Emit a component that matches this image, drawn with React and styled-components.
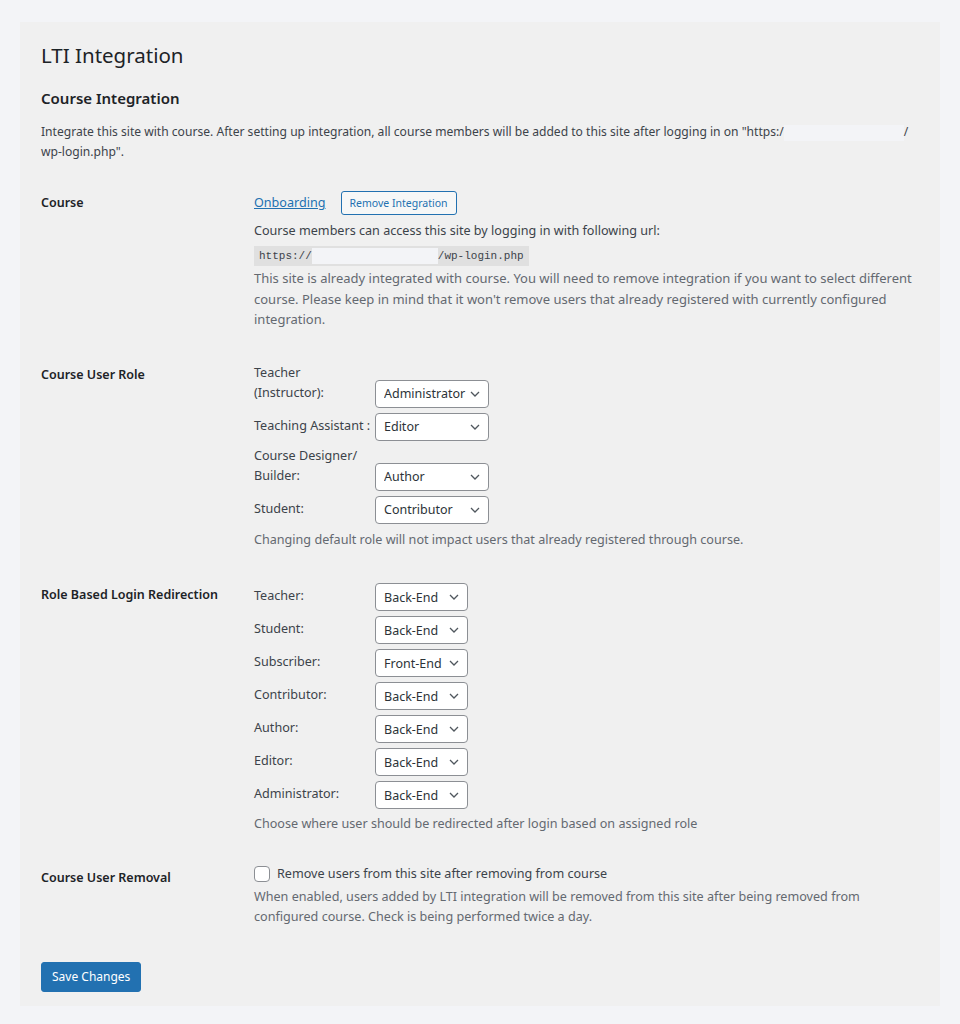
import React from "react";
import styled, { createGlobalStyle } from "styled-components";

const GlobalStyle = createGlobalStyle`
  body {
    margin: 0;
    background: #f3f4f7;
    font-family: "Noto Sans", "Open Sans", sans-serif;
    color: #3c434a;
  }
`;

const Page = styled.div`
  padding: 22px 20px 19px;
`;

const Panel = styled.form`
  background: #f0f0f0;
  padding: 18px 21px 14px;
`;

const Title = styled.h1`
  margin: 0;
  font-size: 20.5px;
  line-height: 30px;
  font-weight: 400;
  color: #1d2327;
`;

const Heading = styled.h2`
  margin: 16px 0 0;
  font-size: 15px;
  line-height: 24px;
  font-weight: 600;
  color: #1d2327;
`;

const Intro = styled.p`
  margin: 12px 0 0;
  font-size: 12.1px;
  line-height: 20px;
  color: #3c434a;
`;

const Hidden = styled.span`
  display: inline-block;
  vertical-align: middle;
  width: ${(p) => p.$w}px;
  height: 16px;
  background: #f3f4f7;
`;

const Table = styled.div`
  margin-top: 15px;
`;

const Row = styled.div`
  display: grid;
  grid-template-columns: 213px 1fr;
  padding: ${(p) => p.$top ?? 14}px 0 19px;
`;

const Th = styled.div`
  padding-top: ${(p) => p.$pad ?? 2}px;
  font-size: 12.5px;
  line-height: 20px;
  font-weight: 600;
  color: #1d2327;
`;

const Td = styled.div`
  font-size: 12.6px;
  line-height: 20px;
  color: #3c434a;
`;

const Inline = styled.div`
  display: flex;
  align-items: center;
  gap: 15px;
  height: 24px;
`;

const Link = styled.a`
  color: #2271b1;
  text-decoration: underline;
  font-size: 12.6px;
`;

const SmallButton = styled.button`
  height: 24px;
  padding: 0 8px;
  border: 1px solid #2271b1;
  border-radius: 3px;
  background: #f6f7f7;
  color: #2271b1;
  font-family: inherit;
  font-size: 10.5px;
  cursor: pointer;
`;

const Text = styled.p`
  margin: 6px 0 0;
`;

const Code = styled.code`
  display: inline-flex;
  align-items: center;
  margin-top: 5px;
  height: 20px;
  padding: 0 5px;
  background: #e0e0e0;
  font-family: "Liberation Mono", "DejaVu Sans Mono", monospace;
  font-size: 11px;
  color: #3c434a;
`;

const Description = styled.p`
  margin: ${(p) => p.$mt ?? 4}px 0 0;
  font-size: ${(p) => p.$size ?? 12.6}px;
  line-height: 20.5px;
  color: #646970;
`;

const FieldList = styled.div`
  display: flex;
  flex-direction: column;
  gap: 5px;
`;

const Field = styled.div`
  display: grid;
  grid-template-columns: 121px auto;
  justify-content: start;
  align-items: end;
`;

const FieldLabel = styled.label`
  padding-bottom: 5px;
  font-size: 12.6px;
  line-height: 20px;
  color: #3c434a;
`;

const SelectWrap = styled.div`
  position: relative;
  width: ${(p) => p.$w}px;
`;

const Select = styled.select`
  appearance: none;
  display: block;
  width: 100%;
  height: 28px;
  padding: 0 20px 0 8px;
  border: 1px solid #8c8f94;
  border-radius: 4px;
  background: #fff;
  color: #2c3338;
  font-family: inherit;
  font-size: 12.5px;
`;

const Chevron = styled.svg`
  position: absolute;
  right: 9px;
  top: 11px;
  width: 10px;
  height: 6px;
  pointer-events: none;
`;

const CheckLine = styled.label`
  display: flex;
  align-items: center;
  gap: 7px;
  height: 20px;
  font-size: 12.6px;
  color: #3c434a;
`;

const Checkbox = styled.span`
  width: 14px;
  height: 14px;
  border: 1px solid #8c8f94;
  border-radius: 4px;
  background: #fff;
`;

const Submit = styled.div`
  margin-top: 15px;
`;

const PrimaryButton = styled.button`
  height: 30px;
  padding: 0 10px;
  border: 1px solid #2271b1;
  border-radius: 3px;
  background: #2271b1;
  color: #fff;
  font-family: inherit;
  font-size: 12px;
  cursor: pointer;
`;

const roleOptions = ["Administrator", "Editor", "Author", "Contributor", "Subscriber"];
const sideOptions = ["Back-End", "Front-End"];

function Dropdown({ value, options, width }) {
  return (
    <SelectWrap $w={width}>
      <Select defaultValue={value}>
        {options.map((o) => (
          <option key={o}>{o}</option>
        ))}
      </Select>
      <Chevron viewBox="0 0 10 6">
        <path d="M1 1l4 4 4-4" fill="none" stroke="#50575e" strokeWidth="1.3" />
      </Chevron>
    </SelectWrap>
  );
}

const courseRoles = [
  [["Teacher", "(Instructor):"], "Administrator"],
  [["Teaching Assistant :"], "Editor"],
  [["Course Designer/", "Builder:"], "Author"],
  [["Student:"], "Contributor"],
];

const redirects = [
  ["Teacher:", "Back-End"],
  ["Student:", "Back-End"],
  ["Subscriber:", "Front-End"],
  ["Contributor:", "Back-End"],
  ["Author:", "Back-End"],
  ["Editor:", "Back-End"],
  ["Administrator:", "Back-End"],
];

export default function App() {
  return (
    <Page>
      <GlobalStyle />
      <Panel>
        <Title>LTI Integration</Title>
        <Heading>Course Integration</Heading>
        <Intro>
          Integrate this site with course. After setting up integration, all course members will be
          added to this site after logging in on "https:/<Hidden $w={120} />/
          <br />
          wp-login.php".
        </Intro>

        <Table>
          <Row>
            <Th $pad={2}>Course</Th>
            <Td>
              <Inline>
                <Link href="#">Onboarding</Link>
                <SmallButton type="button">Remove Integration</SmallButton>
              </Inline>
              <Text>Course members can access this site by logging in with following url:</Text>
              <Code>
                https://<Hidden $w={126} />/wp-login.php
              </Code>
              <Description $mt={2} $size={13}>
                This site is already integrated with course. You will need to remove integration if
                you want to select different course. Please keep in mind that it won't remove users
                that already registered with currently configured integration.
              </Description>
            </Td>
          </Row>

          <Row>
            <Th $pad={2}>Course User Role</Th>
            <Td>
              <FieldList>
                {courseRoles.map(([lines, value]) => (
                  <Field key={lines[0]}>
                    <FieldLabel>
                      {lines.map((l, i) => (
                        <React.Fragment key={l}>
                          {i > 0 && <br />}
                          {l}
                        </React.Fragment>
                      ))}
                    </FieldLabel>
                    <Dropdown value={value} options={roleOptions} width={114} />
                  </Field>
                ))}
              </FieldList>
              <Description $mt={6}>
                Changing default role will not impact users that already registered through course.
              </Description>
            </Td>
          </Row>

          <Row>
            <Th $pad={2}>Role Based Login Redirection</Th>
            <Td>
              <FieldList>
                {redirects.map(([label, value]) => (
                  <Field key={label}>
                    <FieldLabel>{label}</FieldLabel>
                    <Dropdown value={value} options={sideOptions} width={93} />
                  </Field>
                ))}
              </FieldList>
              <Description $mt={5}>
                Choose where user should be redirected after login based on assigned role
              </Description>
            </Td>
          </Row>

          <Row $top={10}>
            <Th $pad={4}>Course User Removal</Th>
            <Td>
              <CheckLine>
                <Checkbox />
                Remove users from this site after removing from course
              </CheckLine>
              <Description $mt={3}>
                When enabled, users added by LTI integration will be removed from this site after
                being removed from configured course. Check is being performed twice a day.
              </Description>
            </Td>
          </Row>
        </Table>

        <Submit>
          <PrimaryButton type="button">Save Changes</PrimaryButton>
        </Submit>
      </Panel>
    </Page>
  );
}
